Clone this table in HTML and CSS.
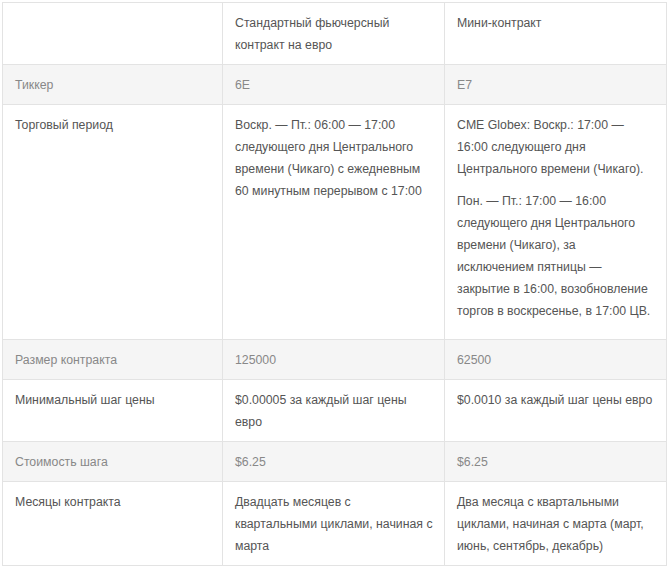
FILE: index.html
```html
<!DOCTYPE html>
<html lang="ru">
<head>
<meta charset="utf-8">
<link rel="stylesheet" href="styles.css">
</head>
<body>
<table class="spec">
  <colgroup><col class="c1"><col class="c2"><col class="c3"></colgroup>
  <tr class="odd">
    <td></td>
    <td>Стандартный фьючерсный контракт на евро</td>
    <td>Мини-контракт</td>
  </tr>
  <tr class="even">
    <td>Тиккер</td>
    <td>6E</td>
    <td>E7</td>
  </tr>
  <tr class="odd">
    <td>Торговый период</td>
    <td>Воскр. — Пт.: 06:00 — 17:00 следующего дня Центрального времени (Чикаго) с ежедневным 60 минутным перерывом с 17:00</td>
    <td><p>CME Globex: Воскр.: 17:00 — 16:00 следующего дня Центрального времени (Чикаго).</p><p>Пон. — Пт.: 17:00 — 16:00 следующего дня Центрального времени (Чикаго), за исключением пятницы — закрытие в 16:00, возобновление торгов в воскресенье, в 17:00 ЦВ.</p></td>
  </tr>
  <tr class="even">
    <td>Размер контракта</td>
    <td>125000</td>
    <td>62500</td>
  </tr>
  <tr class="odd">
    <td>Минимальный шаг цены</td>
    <td>$0.00005 за каждый шаг цены евро</td>
    <td>$0.0010 за каждый шаг цены евро</td>
  </tr>
  <tr class="even">
    <td>Стоимость шага</td>
    <td>$6.25</td>
    <td>$6.25</td>
  </tr>
  <tr class="odd">
    <td>Месяцы контракта</td>
    <td>Двадцать месяцев с квартальными циклами, начиная с марта</td>
    <td>Два месяца с квартальными циклами, начиная с марта (март, июнь, сентябрь, декабрь)</td>
  </tr>
</table>
</body>
</html>
```
FILE: styles.css
```css
html, body {
  margin: 0;
  background: #ffffff;
}
body {
  padding: 2px 0 0 2px;
  font-family: "Liberation Sans", Arial, sans-serif;
  font-size: 12.3px;
  line-height: 22px;
  color: #555555;
}
.spec {
  width: 664px;
  border-collapse: collapse;
  table-layout: fixed;
}
.c1 { width: 220px; }
.c2 { width: 222px; }
.c3 { width: 222px; }
.spec td {
  border: 1px solid #e3e3e3;
  padding: 9px 10px 8px 12px;
  vertical-align: top;
}
.spec td:last-child {
  padding-right: 12px;
}
.spec .even td {
  background: #f5f5f5;
  color: #888888;
}
.spec p {
  margin: 0 0 10px 0;
}
.spec p:last-child {
  margin-bottom: 9px;
}
```
